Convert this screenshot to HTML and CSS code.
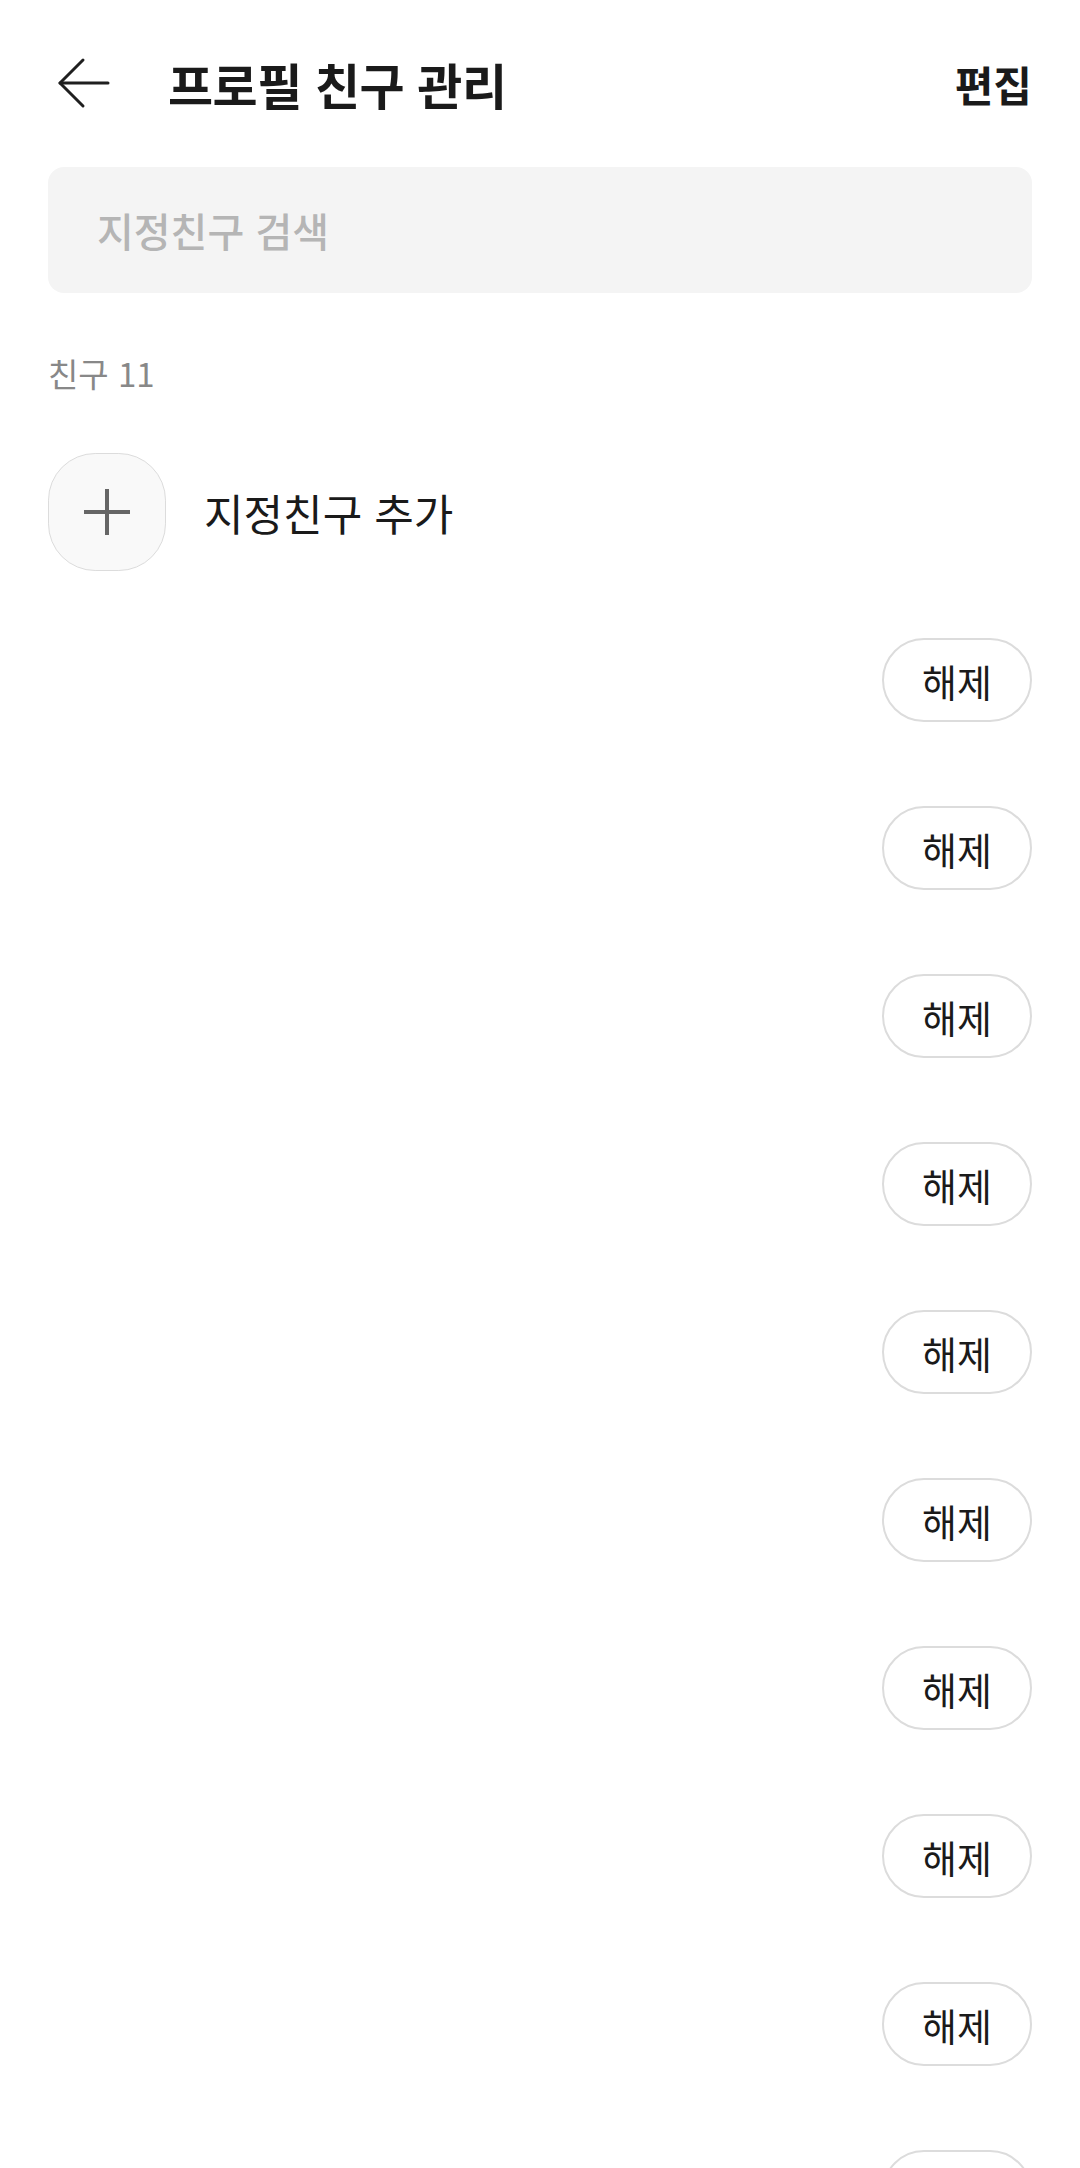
FILE: index.html
```html
<!DOCTYPE html>
<html lang="ko">
<head>
  <meta charset="UTF-8" />
  <meta name="viewport" content="width=device-width, initial-scale=1.0" />
  <title>프로필 친구 관리</title>
  <link rel="stylesheet" href="styles.css">
</head>
<body>
  <div class="screen">

    <header class="topbar">
      <button class="back" type="button" aria-label="뒤로">
        <svg width="56" height="56" viewBox="0 0 56 56" fill="none" stroke="#1f1f1f" stroke-width="3" stroke-linecap="round" stroke-linejoin="round">
          <path d="M3 28 H51" />
          <path d="M26 5 L3 28 L26 51" />
        </svg>
      </button>
      <h1 class="title">프로필 친구 관리</h1>
      <span class="edit">편집</span>
    </header>

    <div class="search">
      <input type="text" placeholder="지정친구 검색" />
    </div>

    <div class="count">친구 11</div>

    <ul class="friends">
      <li class="row add-row">
        <span class="add-icon">
          <svg width="48" height="48" viewBox="0 0 48 48" stroke="#666" stroke-width="4">
            <path d="M24 1 V47 M1 24 H47" />
          </svg>
        </span>
        <span class="add-label">지정친구 추가</span>
      </li>
      <!-- profile rows: avatars and names not loaded -->
      <li class="row"><button class="release" type="button">해제</button></li>
      <li class="row"><button class="release" type="button">해제</button></li>
      <li class="row"><button class="release" type="button">해제</button></li>
      <li class="row"><button class="release" type="button">해제</button></li>
      <li class="row"><button class="release" type="button">해제</button></li>
      <li class="row"><button class="release" type="button">해제</button></li>
      <li class="row"><button class="release" type="button">해제</button></li>
      <li class="row"><button class="release" type="button">해제</button></li>
      <li class="row"><button class="release" type="button">해제</button></li>
      <li class="row"><button class="release" type="button">해제</button></li>
    </ul>
  </div>
</body>
</html>
```

FILE: styles.css
```css
body {
  margin: 0;
  background: #fff;
  font-family: "Noto Sans CJK KR", "Noto Sans", sans-serif;
  color: #1a1a1a;
}
.screen {
  padding: 0 48px;
  height: 2168px;
  overflow: hidden;
}
/* Header */
.topbar {
  display: flex;
  align-items: center;
  height: 166px;
}
.back {
  display: flex;
  padding: 0;
  margin-left: 9px;
  border: none;
  background: none;
}
.title {
  margin: 0 0 0 55px;
  font-size: 49px;
  font-weight: 700;
  letter-spacing: -0.5px;
  flex: 1;
}
.edit {
  font-size: 42px;
  font-weight: 700;
}
/* Search */
.search {
  margin-top: 1px;
  height: 126px;
  background: #f4f4f4;
  border-radius: 16px;
  display: flex;
  align-items: center;
  padding: 0 47px;
}
.search input {
  border: none;
  background: transparent;
  outline: none;
  width: 100%;
  font-family: inherit;
  font-size: 40px;
  font-weight: 500;
}
.search input::placeholder {
  color: #b5b5b5;
}
.count {
  margin-top: 60px;
  height: 40px;
  line-height: 40px;
  font-size: 33px;
  color: #888;
}
/* Friend list */
.friends {
  list-style: none;
  margin: 35px 0 0;
  padding: 0;
}
.row {
  height: 168px;
  display: flex;
  align-items: center;
  justify-content: flex-end;
}
.add-row {
  justify-content: flex-start;
}
.add-icon {
  width: 118px;
  height: 118px;
  box-sizing: border-box;
  border: 1.5px solid #dcdcdc;
  border-radius: 40%;
  background: #f9f9f9;
  display: flex;
  align-items: center;
  justify-content: center;
}
.add-label {
  margin-left: 38px;
  font-size: 43px;
  color: #1a1a1a;
}
.release {
  width: 150px;
  height: 84px;
  border: 2px solid #dcdcdc;
  border-radius: 42px;
  background: #fff;
  font-family: inherit;
  font-size: 38px;
  color: #1a1a1a;
  padding: 0;
}
```
